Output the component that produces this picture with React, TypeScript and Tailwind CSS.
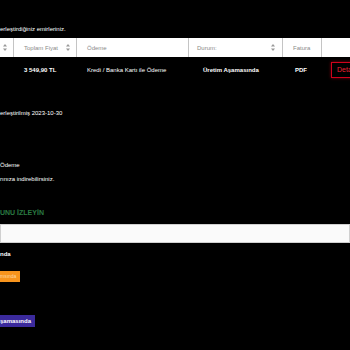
import React from 'react';

const SortIcon = () => (
  <svg width="4" height="7" viewBox="0 0 4 7" className="shrink-0">
    <path d="M2 0 L4 2.6 H0 Z" fill="#999" />
    <path d="M2 7 L4 4.4 H0 Z" fill="#999" />
  </svg>
);

const HeadCell = ({ w, label, sort, last }: { w: string; label?: string; sort?: boolean; last?: boolean }) => (
  <div className={`${w} h-full flex items-center justify-between pl-[10px] pr-[6px] ${last ? '' : 'border-r border-[#c4c4c4]'}`}>
    <span className="text-[#8a8a8a]">{label}</span>
    {sort && <SortIcon />}
  </div>
);

export default function App() {
  return (
    <div
      className="w-[350px] h-[350px] overflow-hidden bg-black text-white text-[6px] leading-[8px]"
      style={{ fontFamily: '"Liberation Sans", Arial, sans-serif' }}
    >
      <div className="pt-[25px]">
        <p className="h-[8px]">erleştirdiğiniz emirleriniz.</p>

        {/* Orders table */}
        <div className="mt-[5px] overflow-hidden">
          <div className="-ml-[30px] w-[420px]">
            <div className="flex h-[19px] bg-white">
              <div className="w-[44px] h-full flex items-center justify-end pr-[6px] border-r border-[#c4c4c4]">
                <SortIcon />
              </div>
              <HeadCell w="w-[63px]" label="Toplam Fiyat" sort />
              <HeadCell w="w-[112px]" label="Ödeme" />
              <div className="w-[94px] h-full flex items-center justify-between pl-[8px] pr-[7px] border-r border-[#c4c4c4]">
                <span className="text-[#8a8a8a]">Durum:</span>
                <SortIcon />
              </div>
              <HeadCell w="w-[39px]" label="Fatura" />
              <HeadCell w="w-[68px]" last />
            </div>
            <div className="flex h-[26px] items-center">
              <div className="w-[44px] text-right pr-[42px] font-bold">0</div>
              <div className="w-[63px] pl-[10px] font-bold">3 549,90 TL</div>
              <div className="w-[112px] pl-[10px]">Kredi / Banka Kartı ile Ödeme</div>
              <div className="w-[94px] pl-[14px] font-bold">Üretim Aşamasında</div>
              <div className="w-[39px] pl-[12px] font-bold">PDF</div>
              <div className="w-[68px] pl-[9px]">
                <button className="h-[16px] px-[5px] border border-[#d0021b] text-[#ee2233] text-[7px] leading-[14px] shadow-[0_0_3px_rgba(208,2,27,0.6)]">
                  Detaylar
                </button>
              </div>
            </div>
          </div>
        </div>

        <p className="mt-[26px] h-[8px]">erleştirilmiş 2023-10-30</p>
        <p className="mt-[44px] h-[8px]">Ödeme</p>
        <p className="mt-[6px] h-[8px]">rınıza indirebilirsiniz.</p>

        <h3 className="mt-[25px] h-[10px] leading-[10px] text-[7px] font-bold text-[#2a7a42]">
          UNU İZLEYİN
        </h3>
        <div className="mt-[6px] h-[19px] bg-[#fafafa] border border-[#d0d0d0]" />

        <p className="mt-[7px] h-[8px] font-bold">nda</p>
        <div className="mt-[13px] w-[20px] h-[11px] bg-[#f7941d] text-[#fcd7a4] text-[5px] leading-[11px] overflow-hidden whitespace-nowrap">
          msında
        </div>
        <div className="mt-[33px] w-[35px] h-[12px] bg-[#3b2a9c] font-bold leading-[12px] overflow-hidden whitespace-nowrap">
          şamasında
        </div>
      </div>
    </div>
  );
}
